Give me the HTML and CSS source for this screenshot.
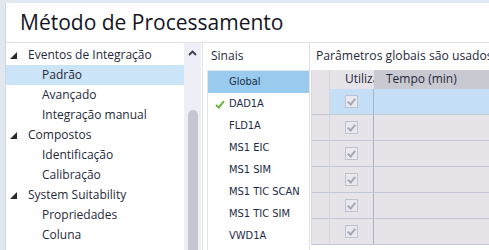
FILE: index.html
```html
<!DOCTYPE html>
<html lang="pt">
<head>
    <meta charset="UTF-8">
    <title>Método de Processamento</title>
    <link rel="stylesheet" href="styles.css">
</head>
<body>
    <div class="window">
        <div class="title">Método de Processamento</div>

        <div class="main">
            <!-- árvore de navegação -->
            <div class="tree-pane">
                <ul class="tree">
                    <li class="node group"><span class="arrow"></span>Eventos de Integração</li>
                    <li class="node child selected">Padrão</li>
                    <li class="node child">Avançado</li>
                    <li class="node child">Integração manual</li>
                    <li class="node group"><span class="arrow"></span>Compostos</li>
                    <li class="node child">Identificação</li>
                    <li class="node child">Calibração</li>
                    <li class="node group"><span class="arrow"></span>System Suitability</li>
                    <li class="node child">Propriedades</li>
                    <li class="node child">Coluna</li>
                </ul>
                <div class="scrollbar">
                    <svg class="scroll-up" width="9" height="6" viewBox="0 0 9 6">
                        <path d="M1 5 L4.5 1.5 L8 5" fill="none" stroke="#3c3c46" stroke-width="1.8"/>
                    </svg>
                    <div class="thumb"></div>
                </div>
            </div>

            <!-- sinais -->
            <div class="signals">
                <div class="pane-label">Sinais</div>
                <ul class="signal-list">
                    <li class="signal selected">Global</li>
                    <li class="signal">
                        <svg class="check" width="10" height="9" viewBox="0 0 10 9">
                            <path d="M1 5 L3.8 7.5 L9 1.2" fill="none" stroke="#6bb346" stroke-width="2"/>
                        </svg>DAD1A
                    </li>
                    <li class="signal">FLD1A</li>
                    <li class="signal">MS1 EIC</li>
                    <li class="signal">MS1 SIM</li>
                    <li class="signal">MS1 TIC SCAN</li>
                    <li class="signal">MS1 TIC SIM</li>
                    <li class="signal">VWD1A</li>
                </ul>
            </div>

            <!-- parâmetros -->
            <div class="params">
                <div class="pane-label">Parâmetros globais são usados</div>
                <div class="grid">
                    <div class="cell head corner"></div>
                    <div class="cell head use">Utilizar</div>
                    <div class="cell head time">Tempo (min)</div>

                    <div class="cell rowhead"></div>
                    <div class="cell use active"><span class="box"></span></div>
                    <div class="cell time active"></div>

                    <div class="cell rowhead"></div>
                    <div class="cell use"><span class="box"></span></div>
                    <div class="cell time"></div>

                    <div class="cell rowhead"></div>
                    <div class="cell use"><span class="box"></span></div>
                    <div class="cell time"></div>

                    <div class="cell rowhead"></div>
                    <div class="cell use"><span class="box"></span></div>
                    <div class="cell time"></div>

                    <div class="cell rowhead"></div>
                    <div class="cell use"><span class="box"></span></div>
                    <div class="cell time"></div>

                    <div class="cell rowhead"></div>
                    <div class="cell use"><span class="box"></span></div>
                    <div class="cell time"></div>
                </div>
            </div>
        </div>
    </div>
</body>
</html>
```

FILE: styles.css
```css
html, body {
    height: 100%;
}
body {
    margin: 0;
    padding: 3px 0 0 5px;
    box-sizing: border-box;
    background-color: #e2e8f0;
    font-family: 'Open Sans', 'Noto Sans', sans-serif;
    color: #1f2a3a;
    overflow: hidden;
}
.window {
    background-color: white;
    border-left: 1px solid #d3d8e0;
    height: 100%;
}
.title {
    height: 39px;
    border-bottom: 1px solid #e1e1e6;
    padding-left: 14px;
    font-size: 21px;
    line-height: 38px;
    color: #15151f;
    white-space: nowrap;
}
.main {
    display: flex;
    height: 207px;
    overflow: hidden;
}

/* árvore */
.tree-pane {
    display: flex;
    width: 195px;
}
.tree {
    list-style: none;
    margin: 0;
    padding: 2px 0 0 0;
    width: 178px;
}
.node {
    height: 20px;
    line-height: 20px;
    font-size: 12px;
    white-space: nowrap;
    display: flex;
    align-items: center;
}
.group {
    padding-left: 4px;
}
.child {
    padding-left: 36px;
}
.selected {
    background-color: #cce4f7;
}
.arrow {
    width: 0;
    height: 0;
    border-style: solid;
    border-width: 0 0 7px 7px;
    border-color: transparent transparent #2a2a30 transparent;
    margin-right: 11px;
    margin-top: 1px;
}
.scrollbar {
    width: 17px;
    background-color: #eeeff6;
    display: flex;
    flex-direction: column;
    align-items: center;
}
.scroll-up {
    margin-top: 7px;
}
.thumb {
    width: 10px;
    flex: 1;
    margin-top: 54px;
    background-color: #c5c6cf;
    border-radius: 5px 5px 0 0;
}

/* sinais */
.signals {
    box-sizing: border-box;
    width: 108px;
    border-left: 1px solid #e0e0e6;
    border-right: 1px solid #e0e0e6;
    margin-left: 1px;
    padding-left: 4px;
}
.pane-label {
    height: 27px;
    line-height: 26px;
    font-size: 12px;
    padding-left: 5px;
    white-space: nowrap;
}
.signals .pane-label {
    padding-left: 4px;
}
.signal-list {
    list-style: none;
    margin: 0;
    padding: 0;
    border-left: 1px solid #e4e4ea;
    border-top: 1px solid #e4e4ea;
    height: 200px;
}
.signal {
    height: 22px;
    line-height: 22px;
    padding-left: 21px;
    font-family: 'DejaVu Sans Condensed', 'DejaVu Sans', sans-serif;
    font-stretch: condensed;
    font-size: 11px;
    color: #1c2b48;
    position: relative;
    white-space: nowrap;
}
.signal.selected {
    background-color: #99cbef;
}
.check {
    position: absolute;
    left: 7px;
    top: 7px;
}

/* parâmetros */
.params {
    flex: 1;
    min-width: 0;
}
.params .pane-label {
    padding-left: 6px;
    font-size: 12.2px;
}
.grid {
    display: grid;
    grid-template-columns: 18px 44px 1fr;
    grid-template-rows: 19px repeat(6, 26px);
    margin-left: 1px;
    border-left: 1px solid #d8d8e0;
}
.cell {
    box-sizing: border-box;
    background-color: #e7e4e9;
    border-bottom: 1px solid #c4c8d6;
    overflow: hidden;
    white-space: nowrap;
}
.cell.head {
    font-size: 12px;
    line-height: 18px;
    border-bottom: none;
}
.head.time {
    background-color: #c9c9d2;
    padding-left: 12px;
}
.corner, .rowhead {
    border-right: 1px solid #d6d6de;
}
.use {
    display: flex;
    justify-content: center;
    align-items: center;
    border-right: 1px solid #a9b1c6;
}
.head.use {
    display: block;
    border-right: none;
    padding-left: 15px;
}
.active {
    background-color: #c5e0f6;
}
.box {
    width: 11px;
    height: 11px;
    border: 1px solid #bfc2cd;
    background-color: #e9e9ef;
    position: relative;
}
.box::after {
    content: '';
    position: absolute;
    left: 3px;
    top: 1px;
    width: 3px;
    height: 6px;
    border: solid #a4a8b6;
    border-width: 0 2px 2px 0;
    transform: rotate(40deg);
}
```
